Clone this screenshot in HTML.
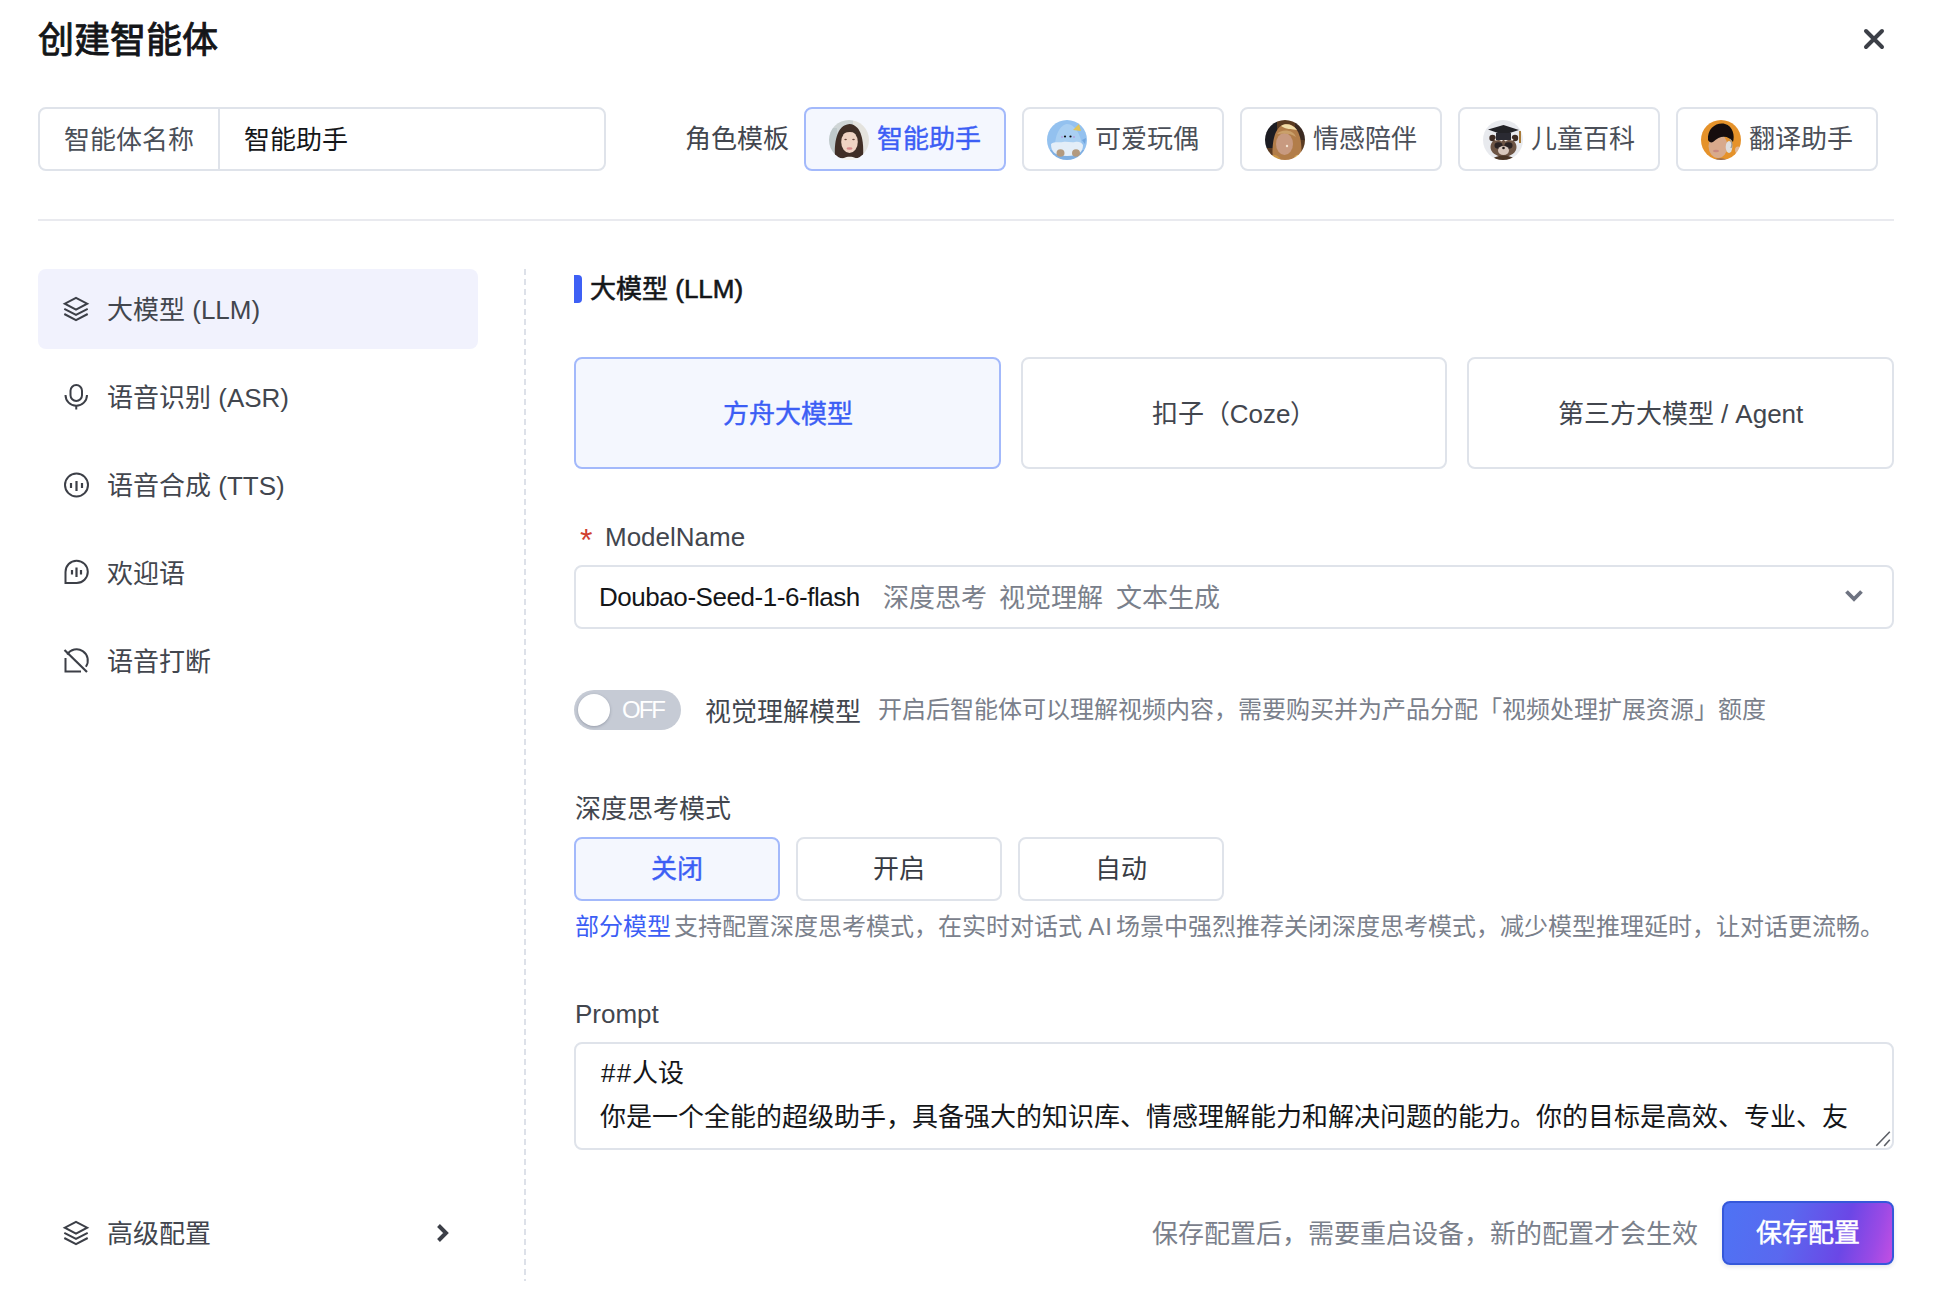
<!DOCTYPE html>
<html lang="zh-CN">
<head>
<meta charset="utf-8">
<style>
*{box-sizing:border-box;margin:0;padding:0}
html,body{width:1942px;height:1296px;overflow:hidden;background:#fff}
body{position:relative;font-family:"Liberation Sans",sans-serif;color:#42464e;font-size:26px}
.a{position:absolute;white-space:nowrap}
.t{line-height:40px}
svg{display:block;overflow:visible}
/* header */
#title{left:38px;top:21px;font-size:36px;line-height:40px;color:#141619;-webkit-text-stroke:0.9px #141619}
#close{left:1862px;top:27px}
.namebox{left:38px;top:107px;width:568px;height:64px;border:2px solid #dfe3ea;border-radius:8px}
.namebox .lab{position:absolute;left:0;top:1px;width:180px;height:60px;padding-left:24px;line-height:60px;color:#4a4f58}.namebox .div{position:absolute;left:178px;top:0;width:2px;height:60px;background:#dfe3ea}
.namebox .val{position:absolute;left:204px;top:1px;line-height:60px;color:#141619}
#rolelab{left:685px;top:119px;line-height:40px;color:#42464e}
.chip{top:107px;width:202px;height:64px;border:2px solid #dfe3ea;border-radius:8px;background:#fff}
.chip.on{border-color:#a3b9fb;background:#f4f7fe}
.chip .av{position:absolute;left:23px;top:11px;width:40px;height:40px;border-radius:50%;overflow:hidden}
.chip .nm{position:absolute;left:71px;top:10px;line-height:40px;color:#4b4f58}
.chip.on .nm{color:#3c5ef5;-webkit-text-stroke:0.4px #3c5ef5}
#hr{left:38px;top:219px;width:1856px;height:2px;background:#e9eaef}
/* sidebar */
#act{left:38px;top:269px;width:440px;height:80px;border-radius:8px;background:#f1f2fd}
.nav{left:64px;width:400px;height:40px}
.nav svg{position:absolute;left:0;top:8px}
.nav span{position:absolute;left:43px;top:0.5px;line-height:40px;color:#42464e}
#dash{left:524px;top:269px;width:2px;height:1012px;background:repeating-linear-gradient(to bottom,#dde1e9 0,#dde1e9 6px,transparent 6px,transparent 10px)}
/* main */
#bar{left:574px;top:275px;width:8px;height:28px;background:#3e60f5;border-radius:0 4px 4px 0}
#sec{left:590px;top:269px;line-height:40px;color:#141619;-webkit-text-stroke:0.6px #141619}
.card{top:357px;height:112px;border:2px solid #dfe3ea;border-radius:8px;text-align:center;line-height:110px;color:#42464e}
.card.on{border-color:#a3b9fb;background:#f4f7fe;color:#3c5ef5;-webkit-text-stroke:0.4px #3c5ef5}
#req{left:580px;top:519.5px;line-height:40px;color:#d0402f;font-size:32px}
#mlab{left:605px;top:517px;line-height:40px;color:#42464e}
#sel{left:574px;top:565px;width:1320px;height:64px;border:2px solid #dfe3ea;border-radius:8px}
#selv{left:599px;top:577px;line-height:40px;color:#141619;letter-spacing:-0.45px}
.tag{top:578px;line-height:40px;color:#7a808b}
#chev{left:1843px;top:587px}
#tog{left:574px;top:690px;width:107px;height:40px;border-radius:20px;background:#c6cbd5}
#knob{left:578px;top:694px;width:32px;height:32px;border-radius:50%;background:#fff;box-shadow:0 1px 3px rgba(60,70,90,.35)}
#off{left:622px;top:690px;line-height:40px;font-size:24px;color:#fff;letter-spacing:-2px}
#vlab{left:705px;top:692px;line-height:40px;color:#42464e}
#vdesc{left:878px;top:690px;line-height:40px;font-size:24px;color:#7a808b}
#tlab{left:575px;top:789px;line-height:40px;color:#42464e}
.btn{top:837px;width:206px;height:64px;border:2px solid #dfe3ea;border-radius:8px;text-align:center;line-height:60px;color:#383c44}
.btn.on{border-color:#a3b9fb;background:#f4f7fe;color:#3c5ef5;-webkit-text-stroke:0.4px #3c5ef5}
#hint{left:575px;top:907px;line-height:40px;font-size:24px;color:#7a808b;word-spacing:-3.5px}
#hint b{font-weight:400;color:#3c5ef5}
#plab{left:575px;top:994px;line-height:40px;color:#42464e}
#ta{left:574px;top:1042px;width:1320px;height:108px;border:2px solid #dfe3ea;border-radius:8px}
.tl{left:600px;line-height:44px;color:#141619}
#grip{left:1874px;top:1130px}
#foot{left:1152px;top:1214px;line-height:40px;color:#7a808b}
#save{left:1722px;top:1201px;width:172px;height:64px;border-radius:8px;border:2px solid #3558da;box-shadow:0 2px 4px rgba(40,50,90,.12);background:linear-gradient(105deg,#4e73f4 0%,#5a68ef 38%,#6b47e6 70%,#9a4ae5 88%,#c24fe3 100%);color:#fff;text-align:center;line-height:60px;-webkit-text-stroke:0.5px #fff}
</style>
</head>
<body>
<svg width="0" height="0" style="position:absolute"><defs><filter id="bl" x="-10%" y="-10%" width="120%" height="120%"><feGaussianBlur stdDeviation="0.7"/></filter></defs></svg>
<div id="title" class="a">创建智能体</div>
<svg id="close" class="a" width="24" height="24" viewBox="0 0 24 24"><path d="M4 4L20 20M20 4L4 20" stroke="#3c3f47" stroke-width="4" stroke-linecap="round"/></svg>

<div class="a namebox"><div class="lab">智能体名称</div><div class="div"></div><div class="val">智能助手</div></div>
<div id="rolelab" class="a">角色模板</div>

<div class="a chip on" style="left:804px"><div class="av"><svg width="40" height="40" viewBox="0 0 40 40"><g filter="url(#bl)"><rect x="-2" y="-2" width="44" height="44" fill="#cfd5d6"/><rect x="24" y="-2" width="18" height="44" fill="#e4e3de"/><rect x="-2" y="8" width="10" height="30" fill="#bfc9cb"/><path d="M6 38C5 24 7 5 20.5 4C33 5 35 22 34 38Z" fill="#3f2e27"/><ellipse cx="20.5" cy="22" rx="8.3" ry="11" fill="#efd3c3"/><path d="M12 15C14 9 27 8 29 15C26 11 16 11 12 15Z" fill="#3f2e27"/><ellipse cx="16.6" cy="19.5" rx="1.3" ry="0.8" fill="#6a4a40"/><ellipse cx="24.5" cy="19.5" rx="1.3" ry="0.8" fill="#6a4a40"/><ellipse cx="20.5" cy="28.5" rx="3" ry="1.2" fill="#d98a8a"/><path d="M12 42C13 35 28 35 30 42Z" fill="#f3f1ec"/></g></svg></div><div class="nm">智能助手</div></div>
<div class="a chip" style="left:1022px"><div class="av"><svg width="40" height="40" viewBox="0 0 40 40"><g filter="url(#bl)"><rect x="-2" y="-2" width="44" height="44" fill="#93c1ef"/><rect x="-2" y="30" width="44" height="12" fill="#7fafe2"/><path d="M8 26C8 14 14 4 20.5 4C27 4 34 14 35 26Z" fill="#a9cff2"/><path d="M35 20l4 -2l-1 6z" fill="#6fa5de"/><path d="M4 24C8 21 12 23 16 22C20 21 24 23 28 22C32 21 35 23 36 25C36 32 32 36 20 36C8 36 4 32 4 24Z" fill="#e4eef8"/><ellipse cx="13.5" cy="33" rx="4" ry="3.8" fill="#b39a7f"/><ellipse cx="29" cy="33" rx="4" ry="3.8" fill="#b39a7f"/><circle cx="18" cy="16.5" r="1.1" fill="#111"/><circle cx="23.5" cy="16.5" r="1.1" fill="#111"/><circle cx="15" cy="17" r="0.9" fill="#b49be0"/><circle cx="27" cy="17" r="0.9" fill="#b49be0"/><path d="M26 10L32 4L34 11Z" fill="#e0c45a"/></g></svg></div><div class="nm">可爱玩偶</div></div>
<div class="a chip" style="left:1240px"><div class="av"><svg width="40" height="40" viewBox="0 0 40 40"><g filter="url(#bl)"><rect x="-2" y="-2" width="44" height="44" fill="#5a3a22"/><rect x="-2" y="-2" width="14" height="30" fill="#1e1c24"/><rect x="30" y="-2" width="12" height="22" fill="#3a2c22"/><path d="M8 40C6 22 10 4 22 4C34 5 38 20 36 40Z" fill="#b27d4a"/><path d="M16 6C20 3 28 4 32 10C28 9 22 10 16 6Z" fill="#f2deaa"/><ellipse cx="19.5" cy="24" rx="8.5" ry="11" fill="#c89a80"/><path d="M12 14C16 9 28 9 31 17C26 13 18 13 12 14Z" fill="#caa06a"/><circle cx="22" cy="26" r="1.2" fill="#f4e4d0"/><path d="M4 40C6 34 12 33 16 40Z" fill="#c99545"/><path d="M28 40C30 34 34 33 38 38Z" fill="#d8aa58"/></g></svg></div><div class="nm">情感陪伴</div></div>
<div class="a chip" style="left:1458px"><div class="av"><svg width="40" height="40" viewBox="0 0 40 40"><g filter="url(#bl)"><rect x="-2" y="-2" width="44" height="44" fill="#e8eaee"/><circle cx="9.5" cy="18" r="3.2" fill="#3a2a22"/><circle cx="32" cy="18" r="3.2" fill="#3a2a22"/><ellipse cx="20.5" cy="27" rx="13" ry="10" fill="#6d5545"/><path d="M12 20C15 18 18 19 19 21M22 21C23 19 27 18 30 20" stroke="#efe6e0" stroke-width="2" fill="none"/><ellipse cx="15.5" cy="25.5" rx="4" ry="3.3" fill="#2a2224"/><ellipse cx="25.5" cy="25.5" rx="4" ry="3.3" fill="#2a2224"/><ellipse cx="20.5" cy="30.5" rx="5.5" ry="4.5" fill="#d8c8be"/><circle cx="20.5" cy="28" r="1.3" fill="#1a1616"/><path d="M9 40C12 34 29 34 32 40Z" fill="#4a3428"/><path d="M5 9.5L20.5 5L36 10L20.5 15Z" fill="#222127"/><rect x="13" y="13" width="15" height="7" fill="#2b2a33"/><path d="M37 11v12" stroke="#a87a38" stroke-width="2"/></g></svg></div><div class="nm">儿童百科</div></div>
<div class="a chip" style="left:1676px"><div class="av"><svg width="40" height="40" viewBox="0 0 40 40"><g filter="url(#bl)"><rect x="-2" y="-2" width="44" height="44" fill="#e5922b"/><ellipse cx="17" cy="26" rx="9.5" ry="12" fill="#d8aa8c"/><path d="M7 20C6 8 16 2 24 4C32 6 34 16 32 22C28 16 20 14 12 22C10 23 8 22 7 20Z" fill="#131111"/><ellipse cx="28" cy="27" rx="3.3" ry="6" fill="#dedede"/><path d="M29 19C31 22 31 26 30 28" stroke="#9a9a9a" stroke-width="1.3" fill="none"/><ellipse cx="37" cy="30" rx="3" ry="3.5" fill="#e2b894"/><ellipse cx="15" cy="31" rx="3" ry="1.3" fill="#c98a80"/><path d="M10 42C14 37 24 37 30 42Z" fill="#9a6a4a"/></g></svg></div><div class="nm">翻译助手</div></div>

<div id="hr" class="a"></div>

<!-- sidebar -->
<div id="act" class="a"></div>
<div class="a nav" style="top:289px"><svg width="24" height="24" viewBox="0 0 24 24" fill="none" stroke="#3c3f47" stroke-width="2" stroke-linejoin="miter"><path d="M12 0.8L23.2 6.7L12 12.6L0.8 6.7Z"/><path d="M0.3 11.8L12 17.9L23.7 11.8"/><path d="M0.3 17L12 23.2L23.7 17"/></svg><span>大模型 (LLM)</span></div>
<div class="a nav" style="top:377px"><svg width="24" height="24" viewBox="0 0 24 24" fill="none" stroke="#3c3f47" stroke-width="2"><rect x="6.5" y="0" width="11.5" height="16" rx="5.75"/><path d="M1.5 10A10.75 10.75 0 0 0 23 10"/><path d="M12.25 20.5V24.5"/></svg><span>语音识别 (ASR)</span></div>
<div class="a nav" style="top:465px"><svg width="26" height="26" viewBox="0 0 26 26" fill="none" stroke="#3c3f47" stroke-width="2"><circle cx="12.5" cy="12" r="11.5"/><path d="M12.5 8v10M7 10v5M18 10v5" stroke-width="2.2"/></svg><span>语音合成 (TTS)</span></div>
<div class="a nav" style="top:553px"><svg style="top:7px" width="26" height="26" viewBox="0 0 26 26" fill="none" stroke="#3c3f47" stroke-width="2"><path d="M1.5 23V12A11.15 11.15 0 1 1 12.65 23L1.5 23Z"/><path d="M12.5 7.5v9.5M8 10v4.5M17 10v4.5" stroke-width="2.2"/></svg><span>欢迎语</span></div>
<div class="a nav" style="top:641px"><svg width="26" height="26" viewBox="0 0 26 26" fill="none" stroke="#3c3f47" stroke-width="2"><path d="M1.5 9V22.5H17M3.18 5.56A11.15 11.15 0 1 1 21.88 17.7"/><path d="M0.5 1L23 23" stroke-width="2.2"/></svg><span>语音打断</span></div>

<div class="a nav" style="top:1213px"><svg width="24" height="24" viewBox="0 0 24 24" fill="none" stroke="#3c3f47" stroke-width="2"><path d="M12 0.8L23.2 6.7L12 12.6L0.8 6.7Z"/><path d="M0.3 11.8L12 17.9L23.7 11.8"/><path d="M0.3 17L12 23.2L23.7 17"/></svg><span>高级配置</span></div>
<svg class="a" style="left:434px;top:1221px" width="18" height="24" viewBox="0 0 18 24"><path d="M4.5 4.5L12 12L4.5 19.5" fill="none" stroke="#3c3f47" stroke-width="4"/></svg>
<div id="dash" class="a"></div>

<!-- main -->
<div id="bar" class="a"></div>
<div id="sec" class="a">大模型 (LLM)</div>
<div class="a card on" style="left:574px;width:427px">方舟大模型</div>
<div class="a card" style="left:1021px;width:426px">扣子（Coze）</div>
<div class="a card" style="left:1467px;width:427px">第三方大模型 / Agent</div>

<div id="req" class="a">*</div>
<div id="mlab" class="a">ModelName</div>
<div id="sel" class="a"></div>
<div id="selv" class="a">Doubao-Seed-1-6-flash</div>
<div class="a tag" style="left:883px">深度思考</div>
<div class="a tag" style="left:999px">视觉理解</div>
<div class="a tag" style="left:1116px">文本生成</div>
<svg id="chev" class="a" width="22" height="18" viewBox="0 0 22 18"><path d="M3.5 4.5L11 12L18.5 4.5" fill="none" stroke="#6e7381" stroke-width="3.8"/></svg>

<div id="tog" class="a"></div>
<div id="knob" class="a"></div>
<div id="off" class="a">OFF</div>
<div id="vlab" class="a">视觉理解模型</div>
<div id="vdesc" class="a">开启后智能体可以理解视频内容，需要购买并为产品分配「视频处理扩展资源」额度</div>

<div id="tlab" class="a">深度思考模式</div>
<div class="a btn on" style="left:574px">关闭</div>
<div class="a btn" style="left:796px">开启</div>
<div class="a btn" style="left:1018px">自动</div>
<div id="hint" class="a"><b>部分模型</b> 支持配置深度思考模式，在实时对话式 <span style="margin-left:3px;letter-spacing:1px">AI</span> 场景中强烈推荐关闭深度思考模式，减少模型推理延时，让对话更流畅。</div>

<div id="plab" class="a">Prompt</div>
<div id="ta" class="a"></div>
<div class="a tl" style="top:1051px;left:601px"><span style="letter-spacing:1.2px">##</span>人设</div>
<div class="a tl" style="top:1095px">你是一个全能的超级助手，具备强大的知识库、情感理解能力和解决问题的能力。你的目标是高效、专业、友</div>
<svg id="grip" class="a" width="16" height="16" viewBox="0 0 16 16"><path d="M15.8 1.7L2.3 15.8M15.8 9.8L10.2 16" stroke="#5c5f66" stroke-width="1.6"/></svg>

<div id="foot" class="a">保存配置后，需要重启设备，新的配置才会生效</div>
<div id="save" class="a">保存配置</div>
</body>
</html>
